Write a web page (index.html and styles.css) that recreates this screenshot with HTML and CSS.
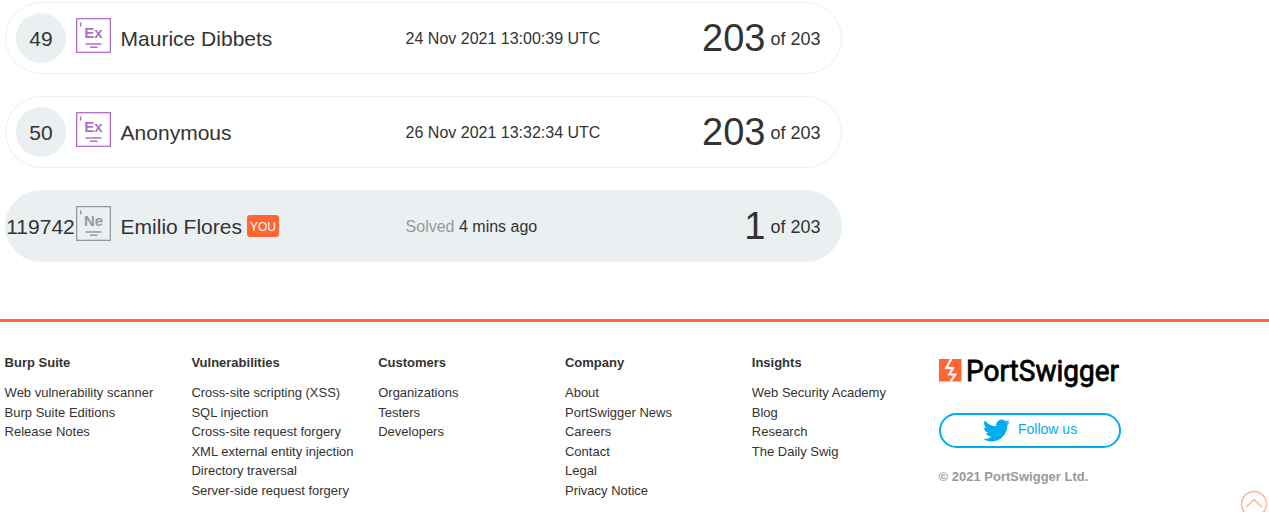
FILE: index.html
```html
<!DOCTYPE html>
<html lang="en">
<head>
<meta charset="utf-8">
<title>Hall of Fame</title>
<link rel="stylesheet" href="styles.css">
</head>
<body>
<main class="board">
  <div class="row">
    <span class="rank">49</span>
    <svg class="level" viewBox="0 0 35 35"><rect x=".6" y=".6" width="33.8" height="33.8"/><path d="M4.7 4.5v4M9.5 26h16M14 29.300h7.500"/><text x="17.5" y="20">Ex</text></svg>
    <span class="name">Maurice Dibbets</span>
    <span class="time">24 Nov 2021 13:00:39 UTC</span>
    <span class="score"><b>203</b><span>of 203</span></span>
  </div>
  <div class="row">
    <span class="rank">50</span>
    <svg class="level" viewBox="0 0 35 35"><rect x=".6" y=".6" width="33.8" height="33.8"/><path d="M4.7 4.5v4M9.5 26h16M14 29.300h7.500"/><text x="17.5" y="20">Ex</text></svg>
    <span class="name">Anonymous</span>
    <span class="time">26 Nov 2021 13:32:34 UTC</span>
    <span class="score"><b>203</b><span>of 203</span></span>
  </div>
  <div class="row current">
    <span class="rank">119742</span>
    <svg class="level newbie" viewBox="0 0 35 35"><rect x=".6" y=".6" width="33.8" height="33.8"/><path d="M4.7 4.5v4M9.5 26h16M14 29.300h7.500"/><text x="17.5" y="20">Ne</text></svg>
    <span class="name">Emilio Flores <span class="you">YOU</span></span>
    <span class="time"><span class="muted">Solved</span> 4 mins ago</span>
    <span class="score"><b>1</b><span>of 203</span></span>
  </div>
</main>
<footer class="footer">
  <nav class="col"><h2>Burp Suite</h2><a>Web vulnerability scanner</a><a>Burp Suite Editions</a><a>Release Notes</a></nav>
  <nav class="col"><h2>Vulnerabilities</h2><a>Cross-site scripting (XSS)</a><a>SQL injection</a><a>Cross-site request forgery</a><a>XML external entity injection</a><a>Directory traversal</a><a>Server-side request forgery</a></nav>
  <nav class="col"><h2>Customers</h2><a>Organizations</a><a>Testers</a><a>Developers</a></nav>
  <nav class="col"><h2>Company</h2><a>About</a><a>PortSwigger News</a><a>Careers</a><a>Contact</a><a>Legal</a><a>Privacy Notice</a></nav>
  <nav class="col"><h2>Insights</h2><a>Web Security Academy</a><a>Blog</a><a>Research</a><a>The Daily Swig</a></nav>
  <div class="brand">
    <svg class="logo" viewBox="0 0 182 36">
      <path fill="#ff6633" d="M0 2h22.500v22.500H0z"/>
      <path class="bolt" d="M12.300 2 7.300 10.700l6.700.600-3.700 6 6 .300-4.700 6.900"/>
      <text x="27" y="24" textLength="153" lengthAdjust="spacingAndGlyphs">PortSwigger</text>
    </svg>
    <a class="follow"><svg class="bird" viewBox="0 0 24 24"><path d="M23.950 4.570a10 10 0 0 1-2.820.770 4.960 4.960 0 0 0 2.160-2.720 9.900 9.900 0 0 1-3.120 1.190 4.920 4.920 0 0 0-8.380 4.480A13.930 13.930 0 0 1 1.640 3.160a4.920 4.920 0 0 0 1.520 6.570 4.900 4.900 0 0 1-2.230-.610v.060a4.920 4.920 0 0 0 3.950 4.830 5 5 0 0 1-2.210.080 4.940 4.940 0 0 0 4.600 3.420A9.870 9.870 0 0 1 0 19.540a13.990 13.990 0 0 0 7.550 2.210c9.050 0 14-7.500 14-13.980 0-.210 0-.420-.020-.630a9.940 9.940 0 0 0 2.420-2.570z"/></svg><span>Follow us</span></a>
    <p class="copy">© 2021 PortSwigger Ltd.</p>
  </div>
</footer>
<svg class="to-top" viewBox="0 0 28 28"><circle cx="14" cy="14" r="12.500"/><path d="M6 17 14 9.800l8 7.200"/></svg>
</body>
</html>
```
FILE: styles.css
```css
* { box-sizing: border-box; }
body {
  margin: 0;
  height: 512px;
  overflow: hidden;
  background: #fff;
  color: #333332;
  font-family: "Liberation Sans", Arial, sans-serif;
}
.board {
  display: grid;
  gap: 22px;
  width: 842px;
  height: 319px;
  padding: 2px 0 0 5px;
  align-content: start;
}
.row {
  display: grid;
  grid-template-columns: 70px 44.600px 285px 1fr auto;
  align-items: center;
  height: 72px;
  padding-right: 20.500px;
  border: 1px solid #eaf0f2;
  border-radius: 36px;
}
.rank {
  width: 50px;
  height: 50px;
  margin-left: 10px;
  border-radius: 50%;
  background: #eaeff2;
  font-size: 21px;
  line-height: 52px;
  text-align: center;
}
.current, .current .rank { background: #eaeff2; }
.current .rank { width: 71px; margin-left: -1px; }
.level {
  width: 35px;
  height: 35px;
  margin-top: -5px;
  fill: none;
  stroke: #b070c6;
  stroke-width: 1.4;
}
.level text {
  fill: #b070c6;
  stroke: none;
  font-size: 15px;
  font-weight: 700;
  text-anchor: middle;
}
.newbie { stroke: #999; }
.newbie text { fill: #999; }
.name {
  display: flex;
  gap: 5px;
  align-items: center;
  padding-top: 2px;
  font-size: 21px;
  line-height: 24px;
}
.you {
  width: 32px;
  height: 22px;
  margin-top: -3px;
  border-radius: 3px;
  background: #ff6633;
  color: #fff;
  font-size: 12px;
  line-height: 24px;
  text-align: center;
}
.time { padding-top: 2px; font-size: 16px; }
.muted { color: #999; }
.score { display: flex; align-items: center; gap: 5px; font-size: 18px; }
.score span { padding-top: 2px; }
.score b { font-size: 38px; font-weight: 400; }
.footer {
  display: grid;
  grid-template-columns: repeat(5, 186.800px) 182px;
  height: 193px;
  padding: 31px 0 0 4.600px;
  border-top: 3px solid #ff6633;
  font-size: 13px;
  line-height: 19.500px;
}
.col { display: flex; flex-direction: column; }
.col h2 { margin: 0 0 10.500px; font-size: 13px; line-height: 19.500px; }
.brand { display: flex; flex-direction: column; padding-top: 4px; }
.logo { width: 182px; height: 36px; overflow: visible; }
.logo text {
  font-family: Roboto, sans-serif;
  font-size: 29.500px;
  font-weight: 400;
  fill: #000;
  stroke: #000;
  stroke-width: .8;
}
.bolt { fill: none; stroke: #fff; stroke-width: 2.200; }
.follow {
  display: flex;
  align-items: center;
  justify-content: center;
  gap: 8px;
  height: 35px;
  margin-top: 20px;
  padding-left: 1px;
  border: 2px solid #00aeef;
  border-radius: 18px;
  color: #00aeef;
  font-size: 14px;
  line-height: 28px;
}
.follow span { padding-bottom: 3px; }
.bird { width: 27px; height: 27px; fill: #00aeef; }
.copy { margin: 19px 0 0; color: #999; font-weight: 700; }
.to-top {
  position: absolute;
  top: 490px;
  left: 1240px;
  width: 28px;
  height: 28px;
  fill: none;
  stroke: #ffb199;
  stroke-width: 1.500;
}
```
